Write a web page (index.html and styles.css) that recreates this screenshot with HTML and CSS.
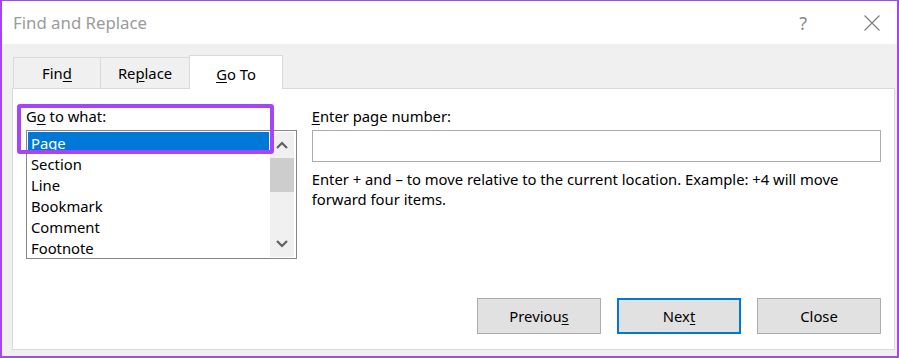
FILE: index.html
```html
<!DOCTYPE html>
<html lang="en">
<head>
    <meta charset="UTF-8">
    <title>Find and Replace</title>
    <link rel="stylesheet" href="styles.css">
</head>
<body>
    <div class="window">
        <div class="titlebar">
            <span class="title">Find and Replace</span>
            <span class="help">?</span>
            <svg class="close" width="16" height="16" viewBox="0 0 16 16">
                <path d="M0.5 0.5 L15.5 15.5 M15.5 0.5 L0.5 15.5" stroke="#7a7a7a" stroke-width="1.1" fill="none"/>
            </svg>
        </div>
        <div class="body">
            <div class="tabs">
                <div class="tab tab-find">Fin<u>d</u></div>
                <div class="tab tab-replace">Re<u>p</u>lace</div>
                <div class="tab tab-goto active"><u>G</u>o To</div>
            </div>
            <div class="panel">
                <div class="cols">
                    <div class="left">
                        <div class="label">G<u>o</u> to what:</div>
                        <div class="listbox">
                            <ul class="items">
                                <li class="selected">Page</li>
                                <li>Section</li>
                                <li>Line</li>
                                <li>Bookmark</li>
                                <li>Comment</li>
                                <li>Footnote</li>
                            </ul>
                            <div class="scrollbar">
                                <div class="sb-btn">
                                    <svg width="12" height="8" viewBox="0 0 12 8"><path d="M1 7 L6 2 L11 7" stroke="#606060" stroke-width="2.2" fill="none"/></svg>
                                </div>
                                <div class="sb-thumb"></div>
                                <div class="sb-track"></div>
                                <div class="sb-btn">
                                    <svg width="12" height="8" viewBox="0 0 12 8"><path d="M1 1 L6 6 L11 1" stroke="#606060" stroke-width="2.2" fill="none"/></svg>
                                </div>
                            </div>
                        </div>
                    </div>
                    <div class="right">
                        <div class="label"><u>E</u>nter page number:</div>
                        <div class="input"></div>
                        <p class="hint">Enter + and – to move relative to the current location. Example: +4 will move forward four items.</p>
                    </div>
                </div>
                <div class="buttons">
                    <div class="btn">Previou<u>s</u></div>
                    <div class="btn default">Nex<u>t</u></div>
                    <div class="btn">Close</div>
                </div>
            </div>
        </div>
        <div class="highlight"></div>
    </div>
</body>
</html>
```

FILE: styles.css
```css
*{
    margin: 0;
    padding: 0;
    box-sizing: border-box;
    list-style-type: none;
}
body{
    font: 14.8px/20px "Noto Sans", "Open Sans", sans-serif;
    color: #000;
    background: #fff;
}
u{
    text-decoration: underline;
    text-underline-offset: 2px;
}
.window{
    position: relative;
    width: 899px;
    height: 358px;
    border: 2px solid #a545f7;
    border-top-width: 1px;
    display: flex;
    flex-direction: column;
}
.titlebar{
    height: 43px;
    display: flex;
    align-items: center;
    padding: 0 17px 0 11px;
    background: #fff;
}
.title{
    flex: 1;
    font-size: 16.8px;
    color: #9b9b9b;
}
.help{
    font-size: 18px;
    color: #8a8a8a;
    margin-right: 57px;
}
.close{
    display: block;
}
.body{
    flex: 1;
    background: #f0f0f0;
    padding: 11px 2px 6px 10px;
    display: flex;
    flex-direction: column;
}
.tabs{
    display: flex;
    align-items: flex-start;
    padding-left: 1px;
}
.tab{
    height: 31px;
    margin-top: 2px;
    border: 1px solid #d9d9d9;
    border-bottom: none;
    text-align: center;
    line-height: 31px;
    background: #f0f0f0;
}
.tab + .tab{
    margin-left: -1px;
}
.tab-find{
    width: 88px;
}
.tab-replace{
    width: 90px;
}
.tab-goto{
    width: 94px;
}
.tab.active{
    position: relative;
    z-index: 1;
    height: 34px;
    margin-top: 0;
    margin-bottom: -1px;
    background: #fff;
    line-height: 36px;
}
.panel{
    flex: 1;
    background: #fff;
    border: 1px solid #d9d9d9;
    padding: 17px 13px 15px 13px;
    display: flex;
    flex-direction: column;
}
.cols{
    display: flex;
    gap: 15px;
}
.left{
    width: 271px;
}
.right{
    width: 570px;
}
.label{
    height: 20px;
    margin-bottom: 4px;
}
.listbox{
    height: 129px;
    border: 1px solid #828790;
    padding: 1px;
    display: flex;
}
.items{
    width: 241px;
    margin-right: 1px;
}
.items li{
    height: 21px;
    line-height: 22px;
    padding-left: 3px;
}
.items li.selected{
    background: #0078d7;
    color: #fff;
}
.scrollbar{
    width: 24px;
    background: #f0f0f0;
    display: flex;
    flex-direction: column;
}
.sb-btn{
    height: 26px;
    display: flex;
    align-items: center;
    justify-content: center;
}
.sb-thumb{
    height: 34px;
    background: #cdcdcd;
}
.sb-track{
    flex: 1;
}
.input{
    height: 32px;
    border: 1px solid #ababab;
}
.hint{
    margin-top: 7px;
    line-height: 20px;
}
.buttons{
    margin-top: auto;
    display: flex;
    justify-content: flex-end;
    gap: 16px;
}
.btn{
    width: 124px;
    height: 36px;
    border: 1px solid #adadad;
    background: #e1e1e1;
    text-align: center;
    line-height: 35px;
}
.btn.default{
    border: 2px solid #0078d7;
    line-height: 33px;
}
.highlight{
    position: absolute;
    left: 15px;
    top: 103px;
    width: 257px;
    height: 50px;
    border: 4px solid #a545f7;
    border-radius: 3px;
}
```
